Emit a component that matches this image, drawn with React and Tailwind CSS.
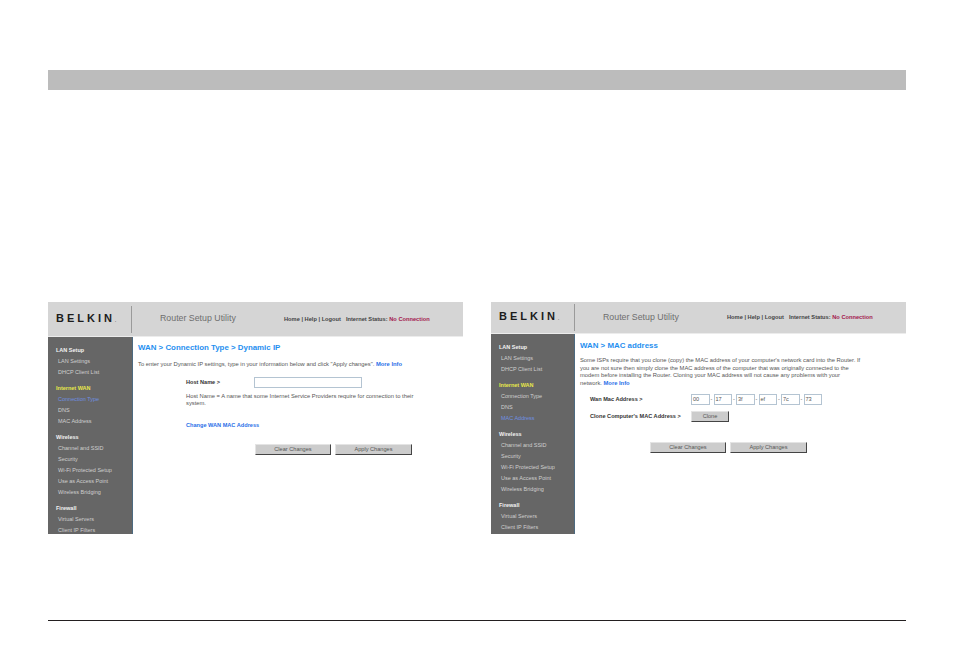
import React from 'react'

const font = "font-['Liberation_Sans',Arial,sans-serif]"

function SideGroup({ title, items, active, yellow, className }) {
  return (
    <div className={className}>
      <div className={`h-[11px] pl-[8px] text-[5.5px] leading-[11px] font-bold ${yellow ? 'text-[#e8e84a]' : 'text-[#f2f2f2]'}`}>{title}</div>
      {items.map((item) => (
        <div key={item} className={`h-[11px] pl-[10px] text-[5.5px] leading-[11px] ${item === active ? 'text-[#6f8fe0]' : 'text-[#cfcfcf]'}`}>
          {item}
        </div>
      ))}
    </div>
  )
}

function Sidebar({ active, width }) {
  return (
    <div className={`${width} h-full shrink-0 overflow-hidden bg-[#666666] border-r border-[#4d6a80] pt-[8px]`}>
      <SideGroup title="LAN Setup" items={['LAN Settings', 'DHCP Client List']} />
      <SideGroup className="mt-[5px]" yellow title="Internet WAN" items={['Connection Type', 'DNS', 'MAC Address']} active={active} />
      <SideGroup className="mt-[5px]" title="Wireless" items={['Channel and SSID', 'Security', 'Wi-Fi Protected Setup', 'Use as Access Point', 'Wireless Bridging']} />
      <SideGroup className="mt-[5px]" title="Firewall" items={['Virtual Servers', 'Client IP Filters']} />
    </div>
  )
}

function Header({ height }) {
  return (
    <div className={`${height} flex items-center bg-[#d5d5d5] border-b border-[#ececec]`}>
      <div className="w-[83px] shrink-0 pb-[2px] pl-[8px] text-[11px] font-bold tracking-[3px] text-[#1c1c1c]">
        BELKIN<span className="text-[4px] tracking-normal">.</span>
      </div>
      <div className="h-[27px] w-px shrink-0 bg-[#9a9a9a]" />
      <div className="ml-[28px] w-[124px] shrink-0 text-[8.8px] text-[#6e6e6e]">Router Setup Utility</div>
      <div className="text-[5.7px] font-bold text-[#444444] whitespace-nowrap">
        Home | Help | Logout<span className="ml-[5px]">Internet Status:</span> <span className="text-[#a3184e]">No Connection</span>
      </div>
    </div>
  )
}

function GrayButton({ label, width }) {
  return (
    <div className={`${width} h-[11px] flex items-center justify-center bg-[#cccccc] border border-[#e4e4e4] border-r-[#444444] border-b-[#444444] text-[5.6px] text-[#555555]`}>
      {label}
    </div>
  )
}

function DynamicIpPage() {
  return (
    <div className="flex h-[232px] flex-col overflow-hidden">
      <Header height="h-[35px]" />
      <div className="flex flex-1 overflow-hidden">
        <Sidebar active="Connection Type" width="w-[85px]" />
        <div className="flex-1 pl-[5px] pt-[6px] text-[#555555]">
          <div className="text-[7.9px] leading-[9px] font-bold text-[#1f8ff0]">WAN &gt; Connection Type &gt; Dynamic IP</div>
          <div className="mt-[9px] text-[5.8px] leading-[7px] whitespace-nowrap">
            To enter your Dynamic IP settings, type in your information below and click "Apply changes". <b className="text-[#2a6fe8]">More Info</b>
          </div>
          <div className="mt-[9px] ml-[48px]">
            <div className="flex h-[11px] items-center">
              <div className="w-[68px] text-[5.6px] font-bold text-[#333333]">Host Name &gt;</div>
              <div className="h-[11px] w-[108px] border border-[#b4c4d2] bg-white" />
            </div>
            <div className="mt-[5px] w-[240px] text-[5.8px] leading-[7px]">
              Host Name = A name that some Internet Service Providers require for connection to their system.
            </div>
            <div className="mt-[15px] text-[5.6px] leading-[7px] font-bold text-[#2a6fe8]">Change WAN MAC Address</div>
            <div className="mt-[15px] ml-[69px] flex gap-[4px]">
              <GrayButton label="Clear Changes" width="w-[76px]" />
              <GrayButton label="Apply Changes" width="w-[77px]" />
            </div>
          </div>
        </div>
      </div>
    </div>
  )
}

function MacAddressPage() {
  const octets = ['00', '17', '3f', 'ef', '7c', '73']
  return (
    <div className="flex h-[232px] flex-col overflow-hidden">
      <Header height="h-[32px]" />
      <div className="flex flex-1 overflow-hidden">
        <Sidebar active="MAC Address" width="w-[84px]" />
        <div className="flex-1 pl-[5px] pt-[7px] text-[#555555]">
          <div className="text-[7.9px] leading-[9px] font-bold text-[#1f8ff0]">WAN &gt; MAC address</div>
          <div className="mt-[7px] text-[5.8px] leading-[7.5px] whitespace-nowrap">
            Some ISPs require that you clone (copy) the MAC address of your computer's network card into the Router. If<br />
            you are not sure then simply clone the MAC address of the computer that was originally connected to the<br />
            modem before installing the Router. Cloning your MAC address will not cause any problems with your<br />
            network. <b className="text-[#2a6fe8]">More Info</b>
          </div>
          <div className="mt-[7px] ml-[10px]">
            <div className="flex h-[11px] items-center">
              <div className="w-[101px] text-[5.6px] font-bold text-[#333333]">Wan Mac Address &gt;</div>
              {octets.map((octet, i) => (
                <React.Fragment key={octet}>
                  {i > 0 && <span className="w-[4px] text-center text-[5.6px]">-</span>}
                  <div className="h-[11px] w-[18.5px] border border-[#b4c4d2] pl-[1px] text-[5.6px] leading-[9px]">{octet}</div>
                </React.Fragment>
              ))}
            </div>
            <div className="mt-[6px] flex h-[11px] items-center">
              <div className="w-[101px] text-[5.6px] font-bold text-[#333333]">Clone Computer's MAC Address &gt;</div>
              <GrayButton label="Clone" width="w-[38px]" />
            </div>
            <div className="mt-[20px] ml-[60px] flex gap-[4px]">
              <GrayButton label="Clear Changes" width="w-[76px]" />
              <GrayButton label="Apply Changes" width="w-[77px]" />
            </div>
          </div>
        </div>
      </div>
    </div>
  )
}

export default function App() {
  return (
    <div className={`${font} h-[668px] w-[954px] overflow-hidden bg-white px-[48px] pt-[70px]`}>
      <div className="h-[20px] bg-[#bcbcbc]" />
      <div className="mt-[212px] grid grid-cols-[415px_415px] justify-between">
        <DynamicIpPage />
        <MacAddressPage />
      </div>
      <div className="mt-[86px] h-px bg-[#231f20]" />
    </div>
  )
}
